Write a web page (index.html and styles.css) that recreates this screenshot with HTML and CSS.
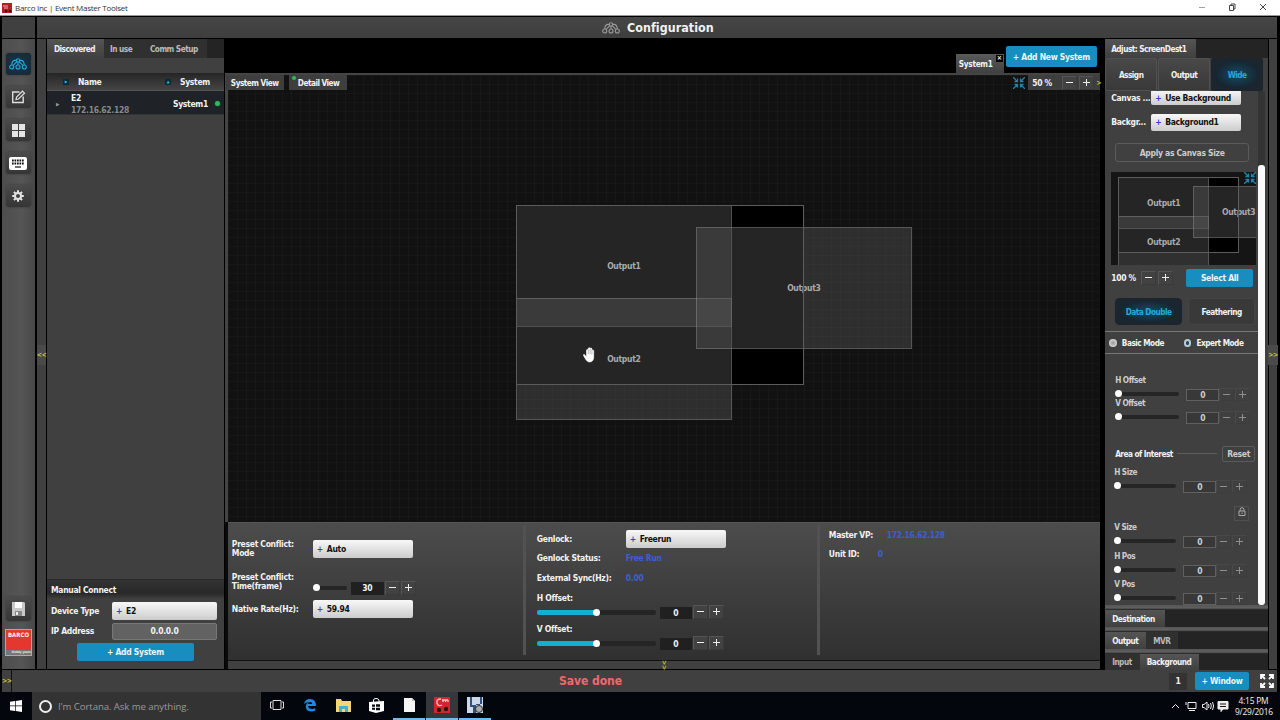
FILE: index.html
```html
<!DOCTYPE html>
<html>
<head>
<meta charset="utf-8">
<title>Event Master Toolset</title>
<link rel="stylesheet" href="styles.css">
</head>
<body>

<!-- shared icons -->
<svg class="defs">
	<symbol id="i-system" viewBox="0 0 18 12">
		<g fill="none" stroke="currentColor" stroke-width="1.1">
			<circle cx="9" cy="2.4" r="1.7"/><circle cx="2.7" cy="9" r="2"/><circle cx="9" cy="9" r="2"/><circle cx="15.3" cy="9" r="2"/>
			<path d="M9 4v3M7.3 2.4H5.5Q3 3 2.7 7M10.7 2.4h1.8Q15 3 15.3 7M7.8 3.7 4.2 7.4M10.2 3.7l3.6 3.7"/>
		</g>
	</symbol>
	<symbol id="i-fit" viewBox="0 0 12 12">
		<path d="M0 0l4 4M12 0L8 4M0 12l4-4M12 12L8 8M4.500 1.500v3h-3M7.500 1.500v3h3M4.500 10.500v-3h-3M7.500 10.500v-3h3" fill="none" stroke="currentColor" stroke-width="1.3"/>
	</symbol>
</svg>

<div class="titlebar">
	<svg class="applogo" viewBox="0 0 10 10"><rect width="10" height="10" fill="#b91b22"/><path d="M1 3h5M2 5h4" stroke="#f3a9a9"/><circle cx="4" cy="8" r="1.300" fill="#411"/><circle cx="8" cy="8" r="1.300" fill="#411"/></svg>
	<span>Barco Inc | Event Master Toolset</span>
	<svg class="wincontrols" viewBox="0 0 70 10" fill="none" stroke="#333" stroke-width=".9"><path d="M1 5.500h6" stroke="#999"/><path d="M31.500 3.500h4v5h-4zM33 3.500V2h4v5h-1.500M62 2l6 6M68 2l-6 6"/></svg>
</div>

<div class="app">
	<div class="header">
		<div class="corner"></div>
		<div class="heading"><svg class="headicon"><use href="#i-system"/></svg>Configuration</div>
	</div>

	<div class="main">
		<div class="sidebar">
			<div class="tool on"><svg width="18" height="12"><use href="#i-system"/></svg></div>
			<div class="tool"><svg width="15" height="14" viewBox="0 0 15 14" fill="none" stroke="#ddd" stroke-width="1.400"><path d="M8.500 2H1.700v10.500h10.500V6.500"/><path d="M5 9.500l.6-2.500L11.500 1.200l2 2L7.500 9z" stroke-width="1.200"/></svg></div>
			<div class="tool"><svg width="13" height="13" viewBox="0 0 13 13" fill="#e4e4e4"><path d="M0 0h6v6H0zM7 0h6v6H7zM0 7h6v6H0zM7 7h6v6H7z"/></svg></div>
			<div class="tool"><svg width="18" height="13" viewBox="0 0 18 13"><rect width="18" height="13" rx="2" fill="#fff"/><path d="M3 3.500h12M3 6.500h12" stroke="#111" stroke-width="1.800" stroke-dasharray="1.700 .8"/><path d="M6 10h6" stroke="#111" stroke-width="1.200"/></svg></div>
			<div class="tool"><svg width="12" height="12" viewBox="0 0 12 12"><circle cx="6" cy="6" r="3" fill="none" stroke="#e4e4e4" stroke-width="2"/><path d="M6 .2v2.400M6 9.400v2.400M.2 6h2.400M9.400 6h2.400M1.900 1.900l1.700 1.700M8.400 8.400l1.700 1.700M1.900 10.100l1.700-1.700M8.400 3.600l1.700-1.700" stroke="#e4e4e4" stroke-width="2"/></svg></div>
			<div class="tool save"><svg width="13" height="14" viewBox="0 0 13 14"><path d="M0 0h12l1 1v13H0z" fill="#c9c9c9"/><path d="M3 0h7v6H3z" fill="#fff"/><path d="M3 9h7v5H3z" fill="#888"/><path d="M4 10h2v3H4z" fill="#eee"/></svg></div>
			<div class="barco"><b>BARCO</b><i>Visibly yours</i></div>
		</div>
		<div class="strip left"><span>&lt;&lt;</span></div>

		<!-- system list -->
		<div class="systems">
			<div class="tabs">
				<div class="tab active discovered">Discovered</div>
				<div class="tab inuse">In use</div>
				<div class="tab comm">Comm Setup</div>
			</div>
			<div class="listhead"><span class="sort">▶</span><span class="name">Name</span><span class="sort">▲</span><span>System</span></div>
			<div class="device">
				<span class="arrow">▶</span>
				<div class="ident">E2<br><span>172.16.62.128</span></div>
				<span>System1</span><i class="led"></i>
			</div>
			<div class="space"></div>
			<div class="connecthead">Manual Connect</div>
			<div class="field"><label>Device Type</label><div class="select">E2</div></div>
			<div class="field"><label>IP Address</label><div class="ip">0.0.0.0</div></div>
			<div class="blue addsystem">+ Add System</div>
		</div>

		<!-- work area -->
		<div class="center">
			<div class="topbar">
				<div class="systab">System1<i>×</i></div>
				<div class="blue addnew">+ Add New System</div>
			</div>
			<div class="canvas">
				<div class="viewbar">
					<div class="view">System View</div>
					<div class="view detail"><i class="led"></i>Detail View</div>
					<div class="zoom">
						<svg class="fit"><use href="#i-fit"/></svg>
						<div class="zoombox"><span>50 %</span><b class="step minus"></b><b class="step plus"></b><em>&gt;</em></div>
					</div>
				</div>
				<div class="screen"></div>
				<div class="out out1">Output1</div>
				<div class="out out2">Output2</div>
				<div class="out out3">Output3</div>
				<div class="screenedge"></div>
				<svg class="hand" viewBox="0 0 13 16"><path d="M3.500 10V3.500q0-1 .9-1t.9 1V7V1.700q0-1 .9-1t.9 1V7V2q0-1 .9-1t.9 1v5.500V4q0-1 .9-1t.9 1V10q0 5-4.500 5Q4 15 2.500 12L.5 8.500q-.3-1 .7-1.200z" fill="#fff" stroke="#fff" stroke-width=".6"/><path d="M5.300 3v4M7.100 2v5M8.900 3v4.500" stroke="#555" stroke-width=".4"/></svg>
			</div>

			<div class="settings">
				<div class="col preset">
					<div class="row mode"><label>Preset Conflict:<br>Mode</label><div class="select">Auto</div></div>
					<div class="row time"><label>Preset Conflict:<br>Time(frame)</label><div class="slider"><i></i></div><div class="num">30</div><b class="step minus"></b><b class="step plus"></b></div>
					<div class="row native"><label>Native Rate(Hz):</label><div class="select">59.94</div></div>
				</div>
				<div class="col genlock">
					<div class="row"><label>Genlock:</label><div class="select">Freerun</div></div>
					<div class="row"><label>Genlock Status:</label><span class="val">Free Run</span></div>
					<div class="row"><label>External Sync(Hz):</label><span class="val">0.00</span></div>
					<div class="row offlabel"><label>H Offset:</label></div>
					<div class="row off"><div class="slider filled"><i></i></div><div class="num">0</div><b class="step minus"></b><b class="step plus"></b></div>
					<div class="row offlabel"><label>V Offset:</label></div>
					<div class="row off"><div class="slider filled"><i></i></div><div class="num">0</div><b class="step minus"></b><b class="step plus"></b></div>
				</div>
				<div class="col master">
					<div class="row"><label>Master VP:</label><span class="val vp">172.16.62.128</span></div>
					<div class="row"><label>Unit ID:</label><span class="val">0</span></div>
				</div>
			</div>
			<div class="bottomstrip"><span>&gt;&gt;</span></div>
		</div>

		<!-- adjust panel -->
		<div class="adjust">
			<div class="tabs"><div class="tab active screendest">Adjust: ScreenDest1</div></div>
			<div class="modes"><div>Assign</div><div>Output</div><div class="glow">Wide</div></div>
			<div class="scroller">
				<div class="content">
					<div class="pick first"><label>Canvas ...</label><div class="select">Use Background</div></div>
					<div class="pick"><label>Backgr...</label><div class="select">Background1</div></div>
					<div class="apply">Apply as Canvas Size</div>
					<div class="mini">
						<div class="screen"></div>
						<div class="out out1">Output1</div>
						<div class="out out2">Output2</div>
						<div class="out out3">Output3</div>
						<div class="screenedge"></div>
						<svg class="fit"><use href="#i-fit"/></svg>
					</div>
					<div class="minizoom"><span>100 %</span><b class="step minus"></b><b class="step plus"></b><div class="blue selectall">Select All</div></div>
					<div class="blend"><div class="glow">Data Double</div><div>Feathering</div></div>
					<div class="radios"><i></i><span>Basic Mode</span><i class="checked"></i><span>Expert Mode</span></div>
					<div class="knobs hoff">
						<label>H Offset</label>
						<div class="ctl"><div class="slider"><i></i></div><div class="num">0</div><b class="step minus"></b><b class="step plus"></b></div>
						<label>V Offset</label>
						<div class="ctl"><div class="slider"><i></i></div><div class="num">0</div><b class="step minus"></b><b class="step plus"></b></div>
					</div>
					<div class="aoi"><span>Area of Interest</span><hr><div class="reset">Reset</div></div>
					<div class="knobs area">
						<label>H Size</label>
						<div class="ctl"><div class="slider"><i></i></div><div class="num">0</div><b class="step minus"></b><b class="step plus"></b></div>
						<div class="lock"><svg width="8" height="9" viewBox="0 0 8 9"><path d="M1 4h6v4.500H1z" fill="none" stroke="#aaa"/><path d="M2.200 4V2.500q0-1.800 1.800-1.800t1.800 1.800V4M4 5.500V7" fill="none" stroke="#aaa"/></svg></div>
						<label>V Size</label>
						<div class="ctl"><div class="slider"><i></i></div><div class="num">0</div><b class="step minus"></b><b class="step plus"></b></div>
						<label>H Pos</label>
						<div class="ctl"><div class="slider"><i></i></div><div class="num">0</div><b class="step minus"></b><b class="step plus"></b></div>
						<label>V Pos</label>
						<div class="ctl"><div class="slider"><i></i></div><div class="num">0</div><b class="step minus"></b><b class="step plus"></b></div>
					</div>
				</div>
				<div class="scrollbar"><div></div></div>
			</div>
			<div class="divider"></div>
			<div class="tabs low"><div class="tab active dest">Destination</div></div>
			<div class="divider"></div>
			<div class="tabs low"><div class="tab active">Output</div><div class="tab">MVR</div></div>
			<div class="divider"></div>
			<div class="tabs low last"><div class="tab">Input</div><div class="tab active">Background</div></div>
		</div>
		<div class="strip right"><span>&gt;&gt;</span></div>
	</div>

	<div class="status">
		<div class="expand">&gt;&gt;</div>
		<div class="message">Save done</div>
		<div class="count">1</div>
		<div class="blue window">+ Window</div>
		<svg class="full" viewBox="0 0 14 14"><path d="M1 5V1h4M9 1h4v4M13 9v4H9M5 13H1V9M1 1l4 4M13 1L9 5M13 13L9 9M1 13l4-4" fill="none" stroke="#fff" stroke-width="1.800"/></svg>
	</div>
</div>

<div class="taskbar">
	<div class="start"><svg width="12" height="12" viewBox="0 0 12 12" fill="#fff"><path d="M0 1.700l5-.7v4.600H0zM5.700.9L12 0v5.600H5.700zM0 6.300h5V11l-5-.7zM5.700 6.300H12V12l-6.300-.9z"/></svg></div>
	<div class="cortana"><i></i>I'm Cortana. Ask me anything.</div>
	<div class="task"><svg width="14" height="10" viewBox="0 0 14 10" fill="none" stroke="#ddd"><path d="M3 .5h8v9H3zM2 2H.5v6H2M12 2h1.500v6H12"/></svg></div>
	<div class="task"><svg width="14" height="14" viewBox="0 0 14 14"><path d="M1 6Q2 1 7 1q6 0 6 7H5q.5 3 4 3 2 0 3.300-1v2.500Q10.500 13.500 8 13.500 2.500 13 2.800 8 3 5.500 6 4.300 3 4 1 6zM5 6h4.300Q9 4 7.200 4 5.500 4 5 6z" fill="#2288dc" fill-rule="evenodd"/></svg></div>
	<div class="task"><svg width="15" height="13" viewBox="0 0 15 13"><path d="M0 0h5l1 2h9v11H0z" fill="#f7d774"/><path d="M3 13V7h9v6H9v-3H6v3z" fill="#3fb2d6"/></svg></div>
	<div class="task"><svg width="15" height="15" viewBox="0 0 15 15"><path d="M0 4l15-1v10l-8 2-7-2z" fill="#fff"/><path d="M4.500 4V2q0-1.500 2.500-1.500T10 2v2" fill="none" stroke="#fff"/><path d="M3 6.500h3v2.300H3zM7 6.300h4v2.500H7zM3 9.700h3v2H3zM7 9.700h4v2.500H7z" fill="#080a10"/></svg></div>
	<div class="task open"><svg width="11" height="14" viewBox="0 0 11 14"><path d="M0 0h8l3 3v11H0z" fill="#f5f5f5"/><path d="M8 0v3h3z" fill="#bbb"/></svg></div>
	<div class="task open current"><svg width="16" height="16" viewBox="0 0 16 16"><rect width="16" height="16" fill="#d12630"/><path d="M7 2Q2 2 3 6t5 2M8 3h6M9 5V3M11.500 5V3M14 5V3" fill="none" stroke="#f7c4c4" stroke-width="1.300"/><circle cx="5" cy="13" r="2.200" fill="#311"/><circle cx="12" cy="12" r="2.200" fill="#311"/></svg></div>
	<div class="task open"><svg width="16" height="16" viewBox="0 0 16 16"><path d="M0 0h16v16H0z" fill="#cdd9ea"/><path d="M3 0h2v8h8V0h2v7H9v9H6v-6H3z" fill="#31507c"/><circle cx="12" cy="12" r="3.500" fill="#aaa" stroke="#333"/></svg></div>
	<svg class="tray" width="58" height="14" viewBox="0 0 58 14" fill="none" stroke="#eee"><path d="M1 9l3.500-3.500L8 9"/><path d="M17 3.500h8v6h-8zM15 3v3M18 11.500h6"/><path d="M31.500 5.500H33L36 3v8l-3-2.500h-1.500zM37.500 5q1 2 0 4M39.500 4q1.700 3 0 6M41.500 3q2.200 4 0 8"/><path d="M47 2.500h10v7.500h-5l-2 2.500V10h-3z" fill="#eee"/><path d="M49 5h6M49 7.500h6" stroke="#111"/></svg>
	<div class="clock">4:15 PM<br>9/29/2016</div>
	<div class="desk"></div>
</div>

</body>
</html>
```
FILE: styles.css
```css
* { box-sizing:border-box; }
body { margin:0; width:1280px; height:720px; overflow:hidden; background:#000; color:#f2f2f2; font:bold 8.5px/10px "DejaVu Sans Condensed","DejaVu Sans",sans-serif; font-stretch:condensed; letter-spacing:-.3px; white-space:nowrap; }
i, em { font-style:normal; }
.defs { display:none; }

/* window frame */
.titlebar { display:flex; align-items:center; height:16px; padding-left:2px; background:#fff; border-bottom:1px solid #999; color:#333; font:8px "Open Sans",sans-serif; letter-spacing:-.27px; }
.applogo { width:10px; height:10px; margin-right:3px; }
.wincontrols { width:70px; height:10px; margin:-2px 12px 0 auto; }

.app { height:676px; padding:1px 3px 0 2px; }
.header { display:flex; gap:2px; height:21px; }
.corner { width:33px; background:#404040; }
.heading { display:flex; align-items:center; flex:1; padding-left:565px; background:linear-gradient(#464646,#3e3e3e); font-size:12.4px; letter-spacing:.05px; }
.headicon { width:18px; height:12px; margin-right:7px; color:#999; }
.main { display:flex; height:630px; margin-top:1px; }

.sidebar { display:flex; flex-direction:column; align-items:center; width:33px; gap:11px; padding-top:14px; background:linear-gradient(90deg,#4d4d4d,#555 60%,#484848); }
.tool { display:flex; align-items:center; justify-content:center; width:25px; height:22px; border-radius:3px; background:linear-gradient(#4b4b4b,#353535); box-shadow:0 0 2px #333; }
.tool.on { background:radial-gradient(#12384b,#182835); color:#25a8d8; }
.tool.save { height:24px; margin-top:auto; margin-bottom:-3px; }
.barco { display:flex; flex-direction:column; width:27px; height:27px; margin-bottom:13px; border:1px solid #aaa; background:linear-gradient(#e33830 80%,#777 80%); font-size:6px; text-align:center; letter-spacing:0; line-height:9px; }
.barco i { margin-top:auto; font-size:3px; line-height:5px; text-align:right; }

.strip { display:flex; align-items:center; justify-content:center; width:9px; background:#404040; color:#c9c934; font-size:7px; letter-spacing:-.5px; }
.strip span { padding:5px 0; margin-top:2px; background:#4a4a4a; }
.strip.left { margin:0 1px 0 2px; }
.strip.right { margin-left:1px; width:8px; }

/* tab rows are set a little tighter than the forms */
.tabs { display:flex; height:19px; background:#242424; }
.tab, .view, .modes, .blend, .radios, .aoi span, .knobs label { font-size:8.2px; letter-spacing:-.5px; }
.tab { display:flex; align-items:center; background:#303030; color:#bbb; }
.tab.active { background:linear-gradient(#555,#404040); color:#f2f2f2; }

.blue { display:flex; align-items:center; justify-content:center; border-radius:2px; background:#178dc0; }
.select { display:flex; align-items:center; height:18px; border-radius:2px; background:linear-gradient(#f8f8f8,#ccc); color:#111; }
.select::before { content:"+"; width:10px; margin-left:4px; color:#4038d0; }
.step { position:relative; width:15px; height:14px; margin-right:1px; border:1px solid #555; border-right-color:#3a3a3a; border-bottom-color:#3a3a3a; background:#424242; }
.step::before { content:""; position:absolute; left:3px; top:5px; width:7px; height:1px; background:#eee; }
.step.plus::after { content:""; position:absolute; left:6px; top:2px; width:1px; height:7px; background:#eee; }
.num { display:flex; align-items:center; justify-content:center; background:#202020; }
.slider { position:relative; height:4px; border-radius:2px; background:#252525; }
.slider i { position:absolute; left:0; top:-2px; width:7px; height:7px; border-radius:50%; background:#fff; }
.slider.filled { height:5px; background:linear-gradient(90deg,#12b0d0 50%,#252525 50%); }
.slider.filled i { left:56px; top:-1px; }
.led { width:5px; height:5px; border-radius:50%; background:#2fb860; box-shadow:0 0 2px #0d7a30; }

/* system list */
.systems { display:flex; flex-direction:column; width:177px; background:#404040; }
.discovered { width:57px; padding-left:7px; }
.inuse { width:38px; padding-left:6px; }
.comm { padding:0 9px 0 8px; }
.listhead { display:flex; align-items:center; height:18px; margin-top:15px; padding-left:16px; background:linear-gradient(#252525,#454545); border-bottom:1px solid #555; }
.sort { width:6px; height:6px; background:#092b37; color:#3ab6dd; font-size:4px; line-height:6px; text-align:center; margin-right:9px; }
.listhead .name { width:87px; }
.device { display:flex; align-items:center; height:24px; padding:2px 0 0 9px; background:#1f2226; border-bottom:1px solid #333; }
.arrow { width:15px; color:#999; font-size:5px; }
.ident { width:102px; line-height:12px; }
.ident span { color:#888; }
.device .led { margin-left:7px; }
.space { flex:1; }
.connecthead { height:20px; padding:5px 4px; border-top:1px solid #292929; background:linear-gradient(#333,#282828 70%,#404040); }
.field { display:flex; align-items:center; height:20px; padding-left:4px; }
.connecthead + .field { margin-top:2px; }
.field label { width:61px; }
.field .select, .ip { width:105px; }
.ip { height:17px; border:1px solid #777; border-radius:2px; background:#626262; line-height:15px; text-align:center; }
.addsystem { width:117px; height:18px; margin:2px 0 8px 30px; }

/* work area */
.center { width:876px; margin-left:1px; background:#0a0a0a; }
.topbar { display:flex; align-items:flex-end; height:34px; padding-left:731px; background:#000; }
.systab { position:relative; width:48px; height:19px; padding:5px 3px; background:linear-gradient(#5a5a5a,#404040); font-size:8.2px; }
.systab i { position:absolute; right:1px; top:1px; width:7px; height:7px; background:#000; font-size:7px; line-height:6px; text-align:center; }
.addnew { width:91px; height:21px; margin:0 0 6px 2px; }
.canvas { position:relative; height:449px; border:solid #444; border-width:2px 0 0 3px; background:repeating-linear-gradient(#ffffff05 0 1px,transparent 1px 9px),repeating-linear-gradient(90deg,#ffffff05 0 1px,transparent 1px 9px),#111; }
.viewbar { display:flex; margin-left:-2px; }
.view { display:flex; align-items:center; width:58px; height:15px; padding-left:5px; background:#3e3e3e; }
.detail { position:relative; margin-left:5px; padding-left:9px; }
.detail .led { position:absolute; left:3px; top:1px; width:4px; height:4px; }
.zoom { display:flex; align-items:center; margin-left:auto; }
.fit { width:12px; height:12px; color:#2583a8; }
.zoombox { display:flex; align-items:center; height:15px; margin-left:3px; padding-left:4px; background:#3e3e3e; }
.zoombox span { width:30px; }
.zoombox .step { margin-right:2px; }
.zoombox em { width:4px; color:#b8c52a; font-size:7px; }
.screen, .screenedge, .out { position:absolute; }
.screen { left:288px; top:130px; width:288px; height:180px; background:#000; }
.screenedge { left:288px; top:130px; width:288px; height:180px; border:1px solid #5c5c5c; }
.out { display:flex; align-items:center; justify-content:center; width:216px; height:122px; border:1px solid #ffffff30; background:rgba(85,85,85,.43); color:#aaa; }
.out1 { left:288px; top:130px; }
.out2 { left:288px; top:223px; }
.out3 { left:468px; top:152px; }
.hand { position:absolute; left:355px; top:272px; width:13px; height:16px; }

.settings { display:flex; height:138px; border-top:1px solid #555; background:linear-gradient(#4c4c4c,#303030); margin:0 0 0 3px; }
.row { display:flex; align-items:center; }
.settings .col { padding-top:7px; }
.preset { width:297px; padding-left:4px; }
.preset label { width:81px; line-height:9px; }
.settings .select { width:100px; }
.mode { height:38px; }
.time { height:31px; padding-top:9px; }
.time label { margin-top:-13px; }
.time .slider { width:34px; margin-right:4px; }
.time .num { width:33px; height:13px; margin-right:1px; }
.native { height:20px; }
.genlock { width:297px; padding-left:11px; border-left:3px solid #525252; border-right:3px solid #525252; margin:2px 0 5px -2px; }
.settings .genlock { padding-top:4px; }
.genlock .row { height:19.5px; }
.genlock label { width:89px; }
.genlock .row.offlabel { height:18px; padding-top:2px; }
.genlock .row.off { height:13px; }
.off .slider { width:119px; margin-right:4px; }
.off .num { width:32px; height:12px; margin:2px 1px 0 0; }
.val { color:#3a5fd8; }
.master { padding-left:9px; }
.settings .master { padding-top:2px; }
.master .row { height:19px; }
.master label { width:49px; }
.master .vp { margin-left:9px; }
.bottomstrip { height:9px; border-top:1px solid #111; margin-left:3px; padding-left:431px; background:#404040; color:#c9c934; }
.bottomstrip span { display:block; width:10px; height:8px; font-size:7px; line-height:9px; transform:rotate(90deg); }

/* adjust panel */
.adjust { width:163px; margin-left:5px; background:#404040; }
.screendest { width:91px; padding-left:6px; }
.modes { display:flex; height:33px; gap:1px; }
.modes div { display:flex; align-items:center; justify-content:center; width:52px; border:1px solid #505050; border-radius:2px; background:linear-gradient(#484848,#393939); }
.modes .glow, .blend .glow { border-color:#1c242c; background:radial-gradient(#124c68,#182631 60%,#20252a); color:#27a9dd; }
.scroller { display:flex; height:514px; overflow:hidden; }
.content { width:153px; }
.scrollbar { width:7px; padding-top:74px; background:#333; }
.scrollbar div { height:440px; border-radius:3px; background:#fafafa; }
.pick { display:flex; align-items:center; height:24px; padding-left:6px; }
.pick.first { height:19px; margin-top:-3px; }
.pick label { width:40px; }
.pick .select { width:90px; height:17px; }
.pick.first .select { height:15px; }
.pick + .pick { margin-top:3px; }
.apply { width:134px; height:19px; margin:9px 0 10px 10px; border:1px solid #5b5b5b; border-radius:3px; line-height:18px; text-align:center; color:#ccc; }
.mini { position:relative; width:145px; height:93px; margin-left:6px; overflow:hidden; background:#151515; }
.mini .screen, .mini .screenedge { left:7px; top:5px; width:121px; height:76px; }
.mini .out { width:91px; height:52px; }
.mini .out1 { left:7px; top:5px; }
.mini .out2 { left:7px; top:44px; }
.mini .out3 { left:82px; top:14px; }
.mini .fit { position:absolute; right:0; top:0; }
.minizoom { display:flex; align-items:center; height:25px; padding-left:6px; }
.minizoom span { width:30px; }
.minizoom .step { margin-right:2px; }
.selectall { width:67px; height:18px; margin-left:11px; }
.blend { display:flex; gap:6px; padding:8px 0 0 10px; }
.blend div { display:flex; align-items:center; justify-content:center; width:67px; height:27px; border:1px solid #444; border-radius:4px; background:#393939; }
.radios { display:flex; align-items:center; height:23px; margin-top:6px; padding-left:4px; border:solid #777; border-width:1px 0; }
.radios i { width:8px; height:8px; margin-right:5px; border-radius:50%; background:radial-gradient(#999,#eee); }
.radios span { width:64px; }
.radios .checked { background:#246; border:2px solid #b7cbd5; }
.knobs { padding-left:10px; }
.knobs label { display:block; height:9px; color:#ccc; }
.ctl { display:flex; align-items:center; height:14px; margin-top:3px; }
.ctl .slider { width:64px; margin-right:7px; }
.ctl .num { width:33px; height:12px; margin-top:2px; border:1px solid #606060; background:#383838; color:#ccc; }
.ctl .step { height:13px; margin-top:1px; opacity:.45; }
.hoff { margin-top:21px; }
.hoff .ctl { margin-bottom:-3px; }
.aoi { display:flex; align-items:center; height:17px; margin-top:24px; padding-left:10px; }
.aoi span { width:58px; }
.aoi hr { width:40px; margin:0 5px 0 4px; border:0; border-top:1px solid #5c5c5c; }
.reset { width:33px; height:16px; border:1px solid #5c5c5c; border-radius:2px; line-height:15px; text-align:center; color:#ccc; }
.area { margin-top:5px; padding-left:9px; }
.area .slider { width:62px; }
.area .ctl { margin-bottom:2.600px; }
.lock { width:15px; height:15px; margin:13px 0 1px 120px; border:1px solid #505050; text-align:center; line-height:12px; }
.divider { height:5px; background:linear-gradient(#555,#606060 60%,#1c1c1c); }
.low { height:17px; }
.low .tab { padding:0 8px 0 7px; }
.low .dest { width:60px; }
.low.last { height:16px; }

/* status line */
.status { display:flex; align-items:center; height:22px; margin-top:1px; background:#404040; }
.expand { width:10px; color:#c9c934; border-right:1px solid #111; font-size:7px; line-height:22px; letter-spacing:-.5px; }
.message { width:1157px; text-align:center; color:#ee6a6a; font-size:12px; letter-spacing:-.05px; line-height:22px; }
.count { width:18px; height:17px; background:#333; line-height:17px; text-align:center; }
.window { width:54px; height:18px; margin-left:8px; }
.full { width:14px; height:14px; margin-left:11px; }

/* windows taskbar */
.taskbar { display:flex; align-items:center; height:28px; background:#03060c; font:9px/11px "Open Sans",sans-serif; letter-spacing:0; }
.start { display:flex; align-items:center; justify-content:center; width:32px; height:28px; }
.cortana { display:flex; align-items:center; width:229px; height:28px; padding-left:7px; background:#333; color:#999; font-size:9.6px; letter-spacing:-.08px; }
.cortana i { width:13px; height:13px; margin-right:6px; border:2px solid #eee; border-radius:50%; }
.task { display:flex; align-items:center; justify-content:center; width:32px; height:28px; margin-right:1px; border-bottom:2px solid transparent; }
.open { border-color:#76b9ed; }
.current { background:#34383d; }
.tray { margin-left:auto; margin-right:6px; }
.clock { width:37px; text-align:center; font-size:8.4px; letter-spacing:-.2px; }
.desk { width:8px; height:28px; }
```
